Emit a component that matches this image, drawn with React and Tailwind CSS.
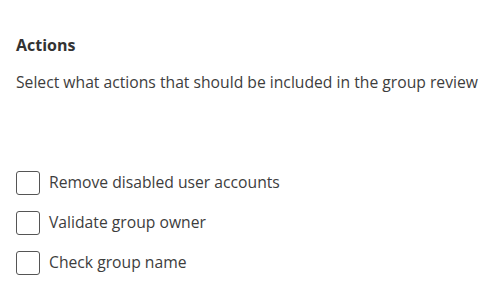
export default function App() {
  const items = ["Remove disabled user accounts", "Validate group owner", "Check group name"];
  return (
    <div className="w-[500px] h-[289px] bg-white pl-4 pt-[34px] text-[#333333]" style={{ fontFamily: '"Open Sans", sans-serif' }}>
      <h2 className="text-[16px] leading-[22px] font-bold">Actions</h2>
      <p className="mt-[15px] text-[15.7px] leading-[22px] text-[#3d3d3d]">Select what actions that should be included in the group review</p>
      <div className="mt-[78px] flex flex-col gap-4">
        {items.map((t) => (
          <label key={t} className="flex items-center gap-[9px] h-6">
            <span className="w-6 h-6 rounded-[3px] border-[1.5px] border-[#555555] bg-white" />
            <span className="text-[15.7px] text-[#3d3d3d]">{t}</span>
          </label>
        ))}
      </div>
    </div>
  );
}
